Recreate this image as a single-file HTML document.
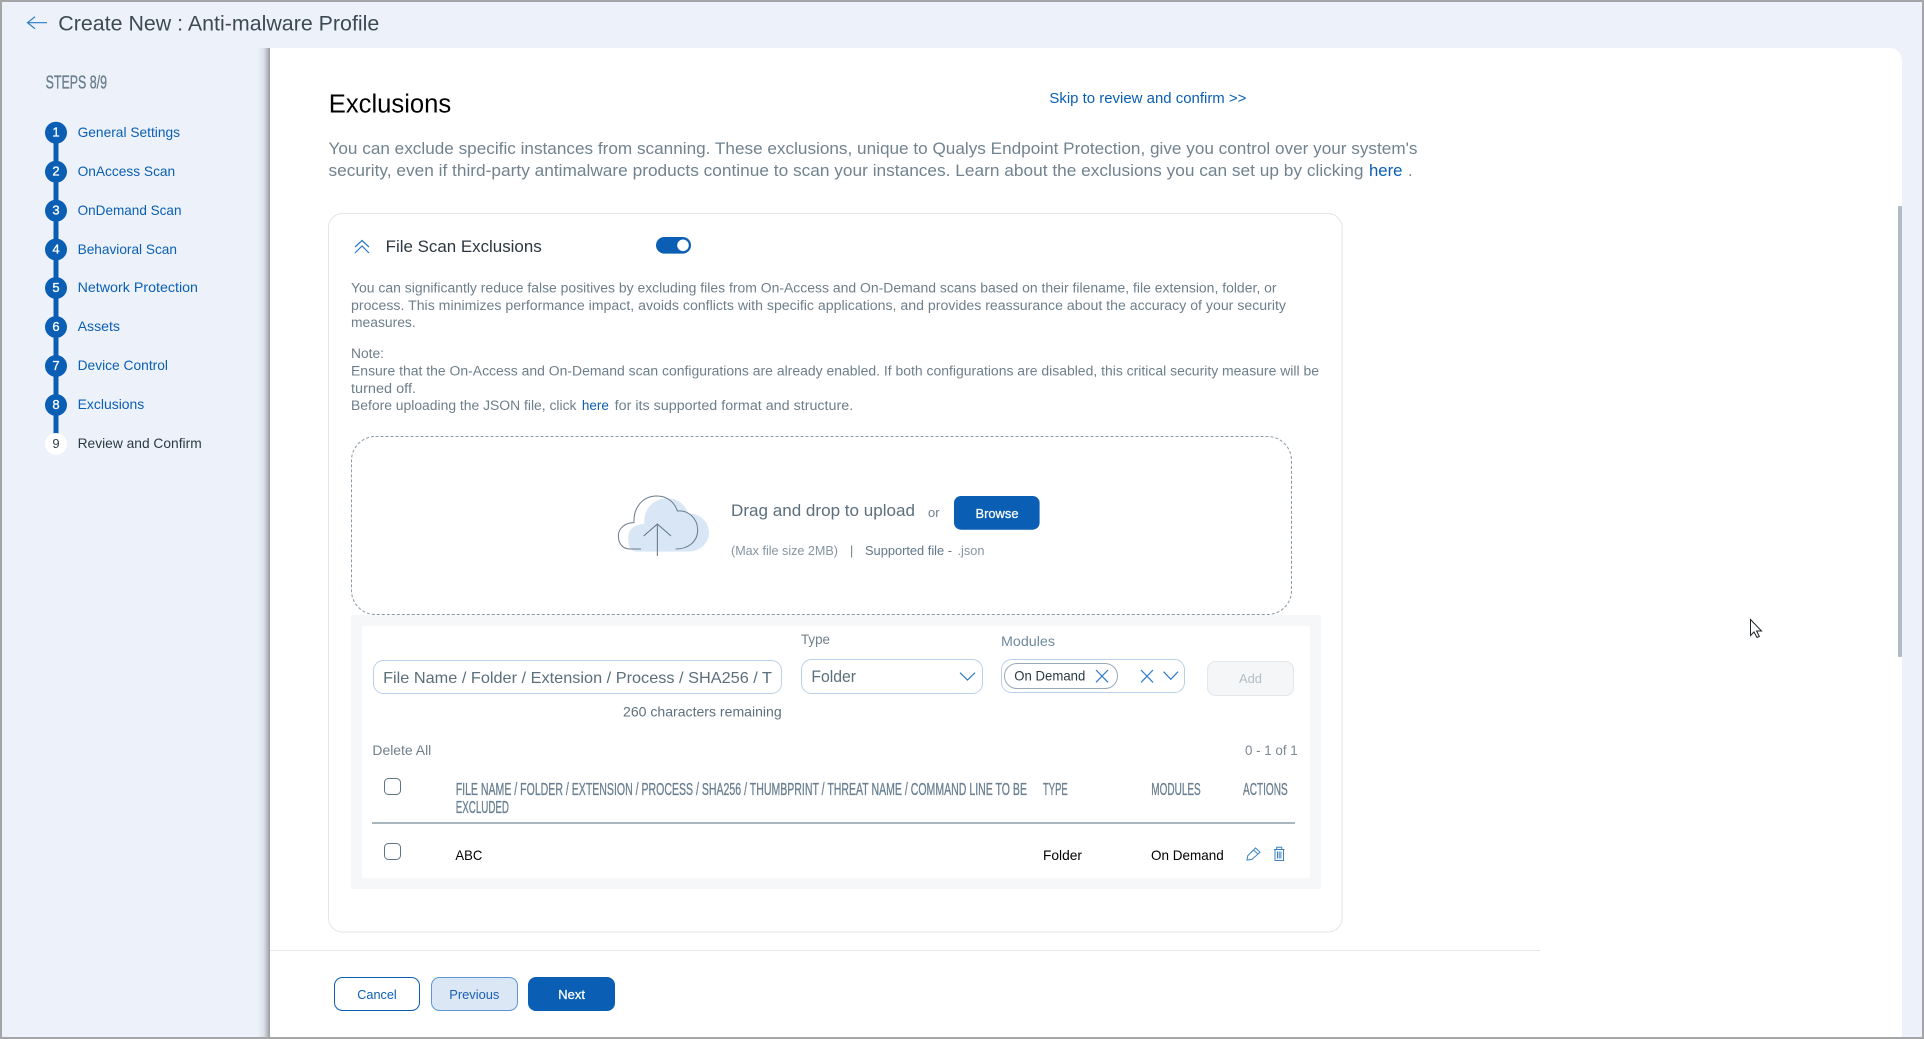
<!DOCTYPE html>
<html lang="en"><head><meta charset="utf-8"><title>Create New : Anti-malware Profile</title>
<style>
html,body{margin:0;padding:0;width:1924px;height:1039px;overflow:hidden;background:#edf2fa}
svg{display:block}
text{font-family:"Liberation Sans",Arial,sans-serif;white-space:pre}
.st{font-size:14px;fill:#0a5fb4}
.n{font-size:13px;fill:#fff;stroke:#fff;stroke-width:.3;text-anchor:middle}
.p{font-size:13.5px;fill:#6d7f8b}
.d{font-size:16.5px;fill:#71838f}
.h{font-size:17.5px;fill:#6a8092;stroke:#6a8092;stroke-width:.35}
.b{font-size:14px;fill:#000}
.m{stroke:#fff;stroke-width:.25}
.l{fill:none;stroke:#2a7ac8;stroke-width:1.2}
</style></head><body>
<svg width="1924" height="1039" viewBox="0 0 1924 1039" xmlns="http://www.w3.org/2000/svg">
<defs><linearGradient id="sh" x1="0" x2="1"><stop offset="0" stop-color="#9a9ea3" stop-opacity="0"/><stop offset=".45" stop-color="#a6aab0" stop-opacity=".22"/><stop offset=".8" stop-color="#9a9ea3" stop-opacity=".7"/><stop offset="1" stop-color="#8f9499" stop-opacity=".95"/></linearGradient></defs>
<rect width="1924" height="1039" fill="#edf2fa"/>
<!-- header -->
<path d="M47 22.7H27.5M35 16.7L27.5 22.7L35 28.7" fill="none" stroke="#2a7ac8" stroke-width="1.2"/>
<text x="58.3" y="30.7" font-size="21.5" fill="#3d4a54" textLength="321" lengthAdjust="spacingAndGlyphs">Create New : Anti-malware Profile</text>
<!-- stepper -->
<text x="45.6" y="88.7" font-size="18.5" fill="#6a7e8c" stroke="#6a7e8c" stroke-width=".35" textLength="61.4" lengthAdjust="spacingAndGlyphs">STEPS 8/9</text>
<rect x="53.5" y="132" width="5" height="312" fill="#0a5fb4"/>
<g fill="#0a5fb4"><circle cx="56" cy="132.7" r="11"/><circle cx="56" cy="171.7" r="11"/><circle cx="56" cy="210.7" r="11"/><circle cx="56" cy="249.5" r="11"/><circle cx="56" cy="288" r="11"/><circle cx="56" cy="327" r="11"/><circle cx="56" cy="366" r="11"/><circle cx="56" cy="405" r="11"/></g>
<circle cx="56" cy="444" r="11" fill="#fff"/>
<text class="n" x="56" y="136.7">1</text><text class="n" x="56" y="175.7">2</text><text class="n" x="56" y="214.7">3</text><text class="n" x="56" y="253.5">4</text><text class="n" x="56" y="292">5</text><text class="n" x="56" y="331">6</text><text class="n" x="56" y="370">7</text><text class="n" x="56" y="409">8</text><text x="56" y="448" font-size="13" text-anchor="middle" fill="#33414b">9</text>
<text class="st" x="77.6" y="136.9" textLength="102.4" lengthAdjust="spacingAndGlyphs">General Settings</text>
<text class="st" x="77.6" y="175.8" textLength="97.6" lengthAdjust="spacingAndGlyphs">OnAccess Scan</text>
<text class="st" x="77.6" y="214.8" textLength="103.9" lengthAdjust="spacingAndGlyphs">OnDemand Scan</text>
<text class="st" x="77.6" y="253.8" textLength="99.4" lengthAdjust="spacingAndGlyphs">Behavioral Scan</text>
<text class="st" x="77.6" y="291.8" textLength="120.4" lengthAdjust="spacingAndGlyphs">Network Protection</text>
<text class="st" x="77.6" y="330.8" textLength="42.4" lengthAdjust="spacingAndGlyphs">Assets</text>
<text class="st" x="77.6" y="369.8" textLength="90.4" lengthAdjust="spacingAndGlyphs">Device Control</text>
<text class="st" x="77.6" y="408.8" textLength="66.7" lengthAdjust="spacingAndGlyphs">Exclusions</text>
<text class="st" x="77.6" y="447.8" textLength="124.1" lengthAdjust="spacingAndGlyphs" style="fill:#2b3a45">Review and Confirm</text>
<!-- main panel -->
<rect x="258" y="48" width="12" height="989" fill="url(#sh)"/>
<path d="M270 48H1888Q1902 48 1902 62V1037H270Z" fill="#fff"/>
<rect x="1898" y="206" width="4" height="451" rx="1" fill="#adbcc6"/>
<text x="328.8" y="112.7" font-size="25.5" fill="#000" textLength="122.4" lengthAdjust="spacingAndGlyphs">Exclusions</text>
<text x="1049.4" y="103" font-size="14.5" fill="#0a5fb4" textLength="197" lengthAdjust="spacingAndGlyphs">Skip to review and confirm &gt;&gt;</text>
<text class="d" x="328.5" y="154" textLength="1089" lengthAdjust="spacingAndGlyphs">You can exclude specific instances from scanning. These exclusions, unique to Qualys Endpoint Protection, give you control over your system's</text>
<text class="d" x="328.5" y="176" textLength="1035" lengthAdjust="spacingAndGlyphs">security, even if third-party antimalware products continue to scan your instances. Learn about the exclusions you can set up by clicking</text>
<text class="d" x="1369" y="176" textLength="33.5" lengthAdjust="spacingAndGlyphs" style="fill:#0a5fb4">here</text>
<text class="d" x="1408" y="176">.</text>
<!-- card -->
<rect x="328.5" y="213.5" width="1013.5" height="718.5" rx="14" fill="#fff" stroke="#e2e6ea"/>
<path class="l" d="M355 247L362 240.5L369 247M355 253L362 246L369 253"/>
<text x="385.7" y="252" font-size="16.5" fill="#2a3740" textLength="156" lengthAdjust="spacingAndGlyphs">File Scan Exclusions</text>
<rect x="656" y="237" width="35" height="16.6" rx="8.3" fill="#0a5fb4"/><circle cx="683" cy="245.3" r="5.8" fill="#fff"/>
<text class="p" x="351" y="292.4" textLength="925.5" lengthAdjust="spacingAndGlyphs">You can significantly reduce false positives by excluding files from On-Access and On-Demand scans based on their filename, file extension, folder, or</text>
<text class="p" x="351" y="310.2" textLength="935" lengthAdjust="spacingAndGlyphs">process. This minimizes performance impact, avoids conflicts with specific applications, and provides reassurance about the accuracy of your security</text>
<text class="p" x="351" y="327" textLength="64.7" lengthAdjust="spacingAndGlyphs">measures.</text>
<text class="p" x="351" y="358" textLength="33" lengthAdjust="spacingAndGlyphs">Note:</text>
<text class="p" x="351" y="375.4" textLength="968" lengthAdjust="spacingAndGlyphs">Ensure that the On-Access and On-Demand scan configurations are already enabled. If both configurations are disabled, this critical security measure will be</text>
<text class="p" x="351" y="393" textLength="65" lengthAdjust="spacingAndGlyphs">turned off.</text>
<text class="p" x="351" y="410" textLength="225.5" lengthAdjust="spacingAndGlyphs">Before uploading the JSON file, click</text>
<text class="p" x="581.9" y="410" textLength="27" lengthAdjust="spacingAndGlyphs" style="fill:#0a5fb4">here</text>
<text class="p" x="614.7" y="410" textLength="238.5" lengthAdjust="spacingAndGlyphs">for its supported format and structure.</text>
<!-- dropzone -->
<rect x="351.5" y="436.5" width="940" height="178" rx="24" fill="#fff" stroke="#8a9ba8" stroke-dasharray="3 2"/>
<g transform="translate(340 430) scale(.33333)">
<path d="M890 365C865 362 865 340 865 320C865 298 885 282 913 282C910 235 940 205 985 205C1015 205 1035 225 1045 250C1080 250 1107 275 1107 308C1107 340 1080 365 1045 365Z" fill="#d9e6f5"/>
<path d="M903 357H870C848 357 835 340 835 318C835 295 855 278 882 278C880 230 910 198 950 198C985 198 1005 220 1012 243C1045 240 1073 265 1073 300C1073 335 1045 357 1007 357" fill="none" stroke="#6a7c8a" stroke-width="3"/>
<path d="M952 378V282M911 318L952 282L993 318" fill="none" stroke="#5e7180" stroke-width="3"/>
</g>
<text x="731" y="515.8" font-size="16.5" fill="#5c6f7c" textLength="184" lengthAdjust="spacingAndGlyphs">Drag and drop to upload</text>
<text x="928" y="517" font-size="13" fill="#6e808c" textLength="11.5" lengthAdjust="spacingAndGlyphs">or</text>
<rect x="954" y="496" width="85.6" height="33.7" rx="7" fill="#0a5fb4"/>
<text class="m" x="975.5" y="518" font-size="13" fill="#fff" textLength="43" lengthAdjust="spacingAndGlyphs">Browse</text>
<text x="731" y="555" font-size="12.5" fill="#8495a0" textLength="107" lengthAdjust="spacingAndGlyphs">(Max file size 2MB)</text>
<text x="850" y="555" font-size="12.5" fill="#6e808c">|</text>
<text x="865" y="555" font-size="12.5" fill="#60788a" textLength="87" lengthAdjust="spacingAndGlyphs">Supported file -</text>
<text x="957.5" y="555" font-size="12.5" fill="#8495a0" textLength="27" lengthAdjust="spacingAndGlyphs">.json</text>
<!-- form panel -->
<rect x="351" y="615" width="970" height="274" fill="#f5f7f9"/>
<rect x="362" y="626" width="948" height="252" fill="#fff"/>
<rect x="373.5" y="660.5" width="408" height="33" rx="10" fill="#fff" stroke="#b9d0e8"/>
<text x="383.1" y="682.8" font-size="16" fill="#5b6f7c" textLength="388.9" lengthAdjust="spacingAndGlyphs">File Name / Folder / Extension / Process / SHA256 / T</text>
<text x="623" y="716.4" font-size="14" fill="#5e717e" textLength="158.7" lengthAdjust="spacingAndGlyphs">260 characters remaining</text>
<text x="801" y="644" font-size="14" fill="#6e808c" textLength="29" lengthAdjust="spacingAndGlyphs">Type</text>
<rect x="801.5" y="659.5" width="181" height="34" rx="10" fill="#fff" stroke="#b9d0e8"/>
<text x="811.4" y="682" font-size="16.5" fill="#5b6f7c" textLength="44.6" lengthAdjust="spacingAndGlyphs">Folder</text>
<path class="l" d="M960 672.7L967.5 680L975 672.7"/>
<text x="1001" y="646" font-size="14" fill="#6e8a9c" textLength="54" lengthAdjust="spacingAndGlyphs">Modules</text>
<rect x="1001.5" y="659.5" width="183" height="33" rx="10" fill="#fff" stroke="#b9d0e8"/>
<rect x="1004.5" y="663.5" width="113" height="25" rx="12.5" fill="#fff" stroke="#9aaab6"/>
<text x="1014.3" y="680.5" font-size="14" fill="#2a3a45" textLength="71" lengthAdjust="spacingAndGlyphs">On Demand</text>
<path class="l" d="M1096 670L1108 682.3M1108 670L1096 682.3M1141 670L1153 682.4M1153 670L1141 682.4M1163.6 671.7L1170.8 679.3L1178 671.7"/>
<rect x="1207.5" y="661.5" width="86" height="34" rx="8" fill="#f4f6f8" stroke="#e3e7eb"/>
<text x="1239" y="683" font-size="13" fill="#b3bec6" textLength="23" lengthAdjust="spacingAndGlyphs">Add</text>
<text x="372.4" y="755" font-size="14" fill="#6e808c" textLength="58.9" lengthAdjust="spacingAndGlyphs">Delete All</text>
<text x="1245" y="755" font-size="14" fill="#7a8b96" textLength="52.7" lengthAdjust="spacingAndGlyphs">0 - 1 of 1</text>
<!-- table -->
<rect x="384.5" y="778.5" width="16" height="16" rx="4" fill="#fff" stroke="#5f7380"/>
<rect x="384.5" y="843.5" width="16" height="16" rx="4" fill="#fff" stroke="#5f7380"/>
<text class="h" x="455.7" y="795" textLength="571.3" lengthAdjust="spacingAndGlyphs">FILE NAME / FOLDER / EXTENSION / PROCESS / SHA256 / THUMBPRINT / THREAT NAME / COMMAND LINE TO BE</text>
<text class="h" x="455.7" y="813" textLength="53.3" lengthAdjust="spacingAndGlyphs">EXCLUDED</text>
<text class="h" x="1043" y="795" textLength="24.7" lengthAdjust="spacingAndGlyphs">TYPE</text>
<text class="h" x="1151.3" y="795" textLength="49.4" lengthAdjust="spacingAndGlyphs">MODULES</text>
<text class="h" x="1243" y="795" textLength="44.7" lengthAdjust="spacingAndGlyphs">ACTIONS</text>
<rect x="372" y="822" width="923" height="2" fill="#a9b6be"/>
<text class="b" x="455.4" y="860" textLength="26.9" lengthAdjust="spacingAndGlyphs">ABC</text>
<text class="b" x="1043" y="860" textLength="39" lengthAdjust="spacingAndGlyphs">Folder</text>
<text class="b" x="1151" y="860" textLength="72.7" lengthAdjust="spacingAndGlyphs">On Demand</text>
<path d="M1247 860L1247.8 855.6L1255.6 848L1260 852.2L1252 859.4ZM1253.6 850L1258 854.2" fill="none" stroke="#3b82c4"/>
<path d="M1274 849.5H1284.5M1276.7 849.5V847.2H1281.7V849.5M1275 849.5V860.5H1283.5V849.5M1277.5 851.5V858.5M1279.2 851.5V858.5M1280.9 851.5V858.5" fill="none" stroke="#3b82c4"/>
<!-- footer -->
<rect x="270" y="950" width="1270" height="1" fill="#e3e8eb"/>
<rect x="334.5" y="977.5" width="85" height="33" rx="8" fill="#fff" stroke="#0a5fb4"/>
<text x="357.3" y="999" font-size="13" fill="#0a5fb4" textLength="39.4" lengthAdjust="spacingAndGlyphs">Cancel</text>
<rect x="431.5" y="977.5" width="86" height="33" rx="8" fill="#dbe7f5" stroke="#5f96d0"/>
<text x="449.3" y="999" font-size="13" fill="#1a5fb4" textLength="50" lengthAdjust="spacingAndGlyphs">Previous</text>
<rect x="528" y="977" width="87" height="34" rx="8" fill="#0a5fb4"/>
<text class="m" x="558.3" y="999" font-size="13" fill="#fff" textLength="26.7" lengthAdjust="spacingAndGlyphs">Next</text>
<!-- cursor -->
<path d="M1750.5 619.5V635.5L1754 632L1757 637.5L1759.3 636.5L1756.6 631H1761.5Z" fill="#fff" stroke="#1c2228" stroke-width="1"/>
<!-- window frame -->
<path d="M0 0H1924V1039H0ZM2 2V1037H1922V2Z" fill="#a3a5a7" fill-rule="evenodd"/>
</svg>
</body></html>
